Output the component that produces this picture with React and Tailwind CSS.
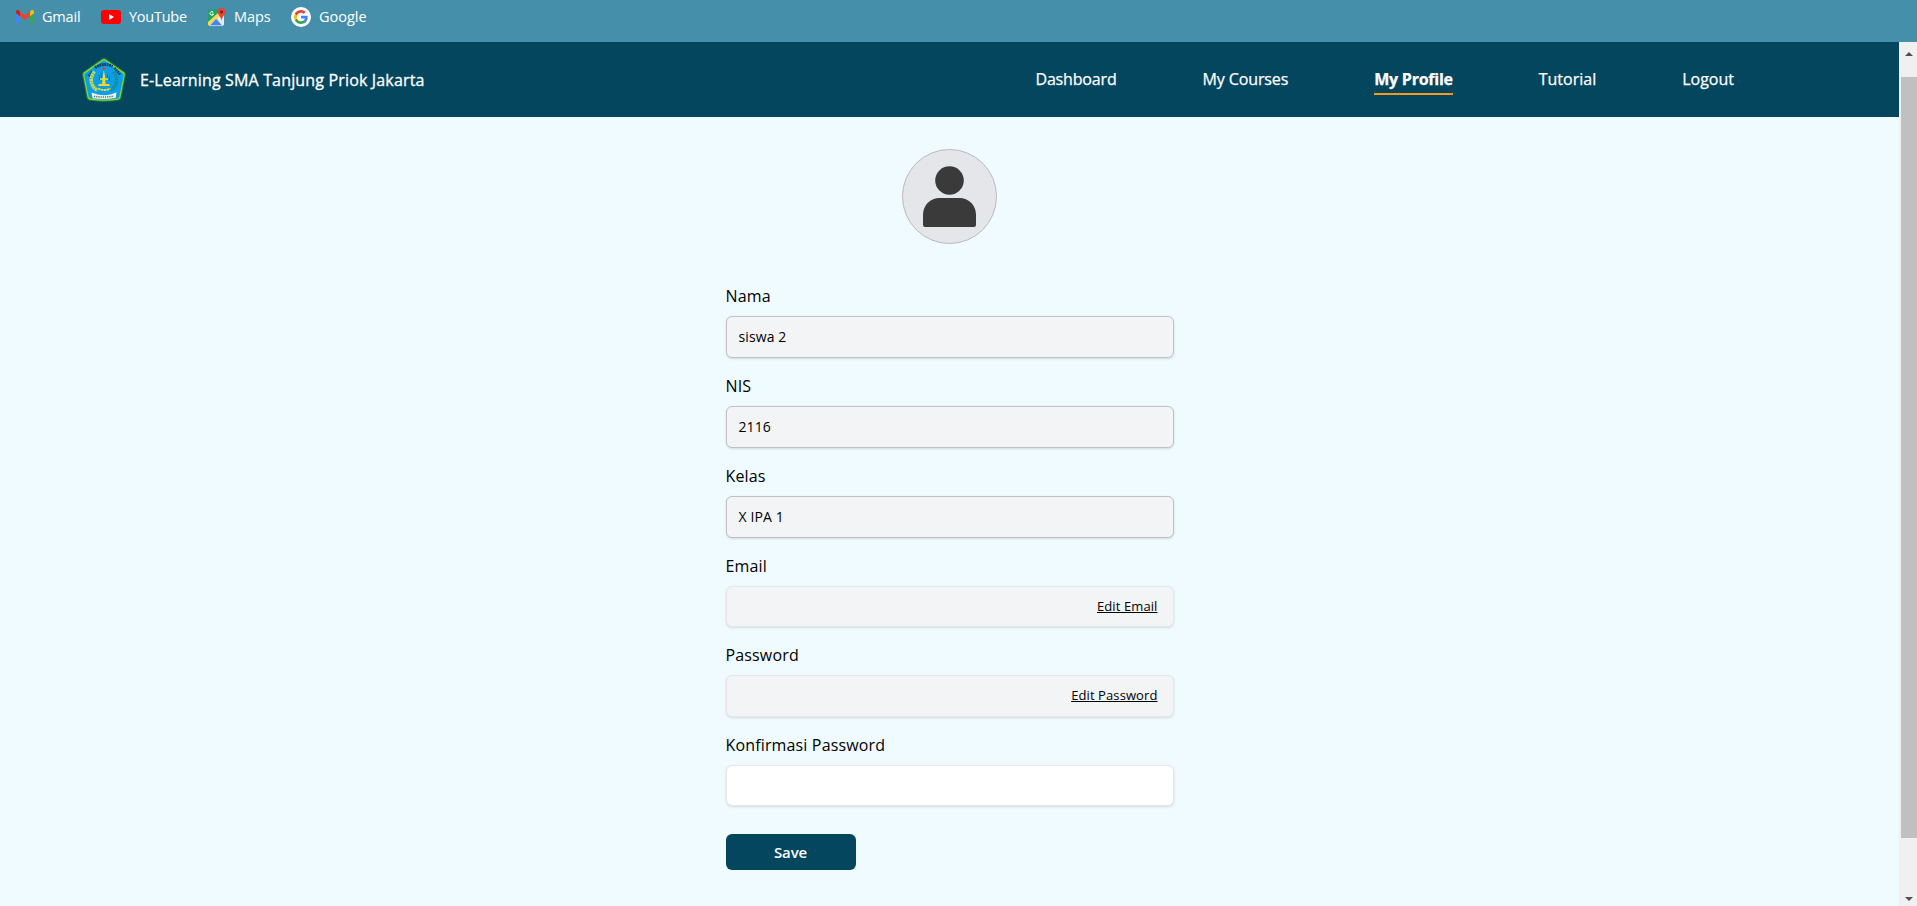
import React from "react";

const NAV = [
  { label: "Dashboard", className: "tracking-[-0.16px] border-transparent" },
  { label: "My Courses", className: "tracking-[-0.12px] border-transparent" },
  { label: "My Profile", className: "tracking-[-0.25px] border-[#f7991f] font-bold" },
  { label: "Tutorial", className: "border-transparent" },
  { label: "Logout", className: "border-transparent" },
];

function GmailIcon() {
  return (
    <svg className="h-[14px] w-[18px]" viewBox="0 0 18 14">
      <path d="M0 3v9.500a1.300 1.300 0 0 0 1.300 1.300H4V6z" fill="#4285f4" />
      <path d="M18 3v9.500a1.300 1.300 0 0 1-1.300 1.300H14V6z" fill="#34a853" />
      <path d="M14 2v4.300l4-3V1.800C18 .2 16.200-.5 15 .5z" fill="#fbbc04" />
      <path d="M4 6.300V1.400l5 3.800 5-3.800v4.900L9 10z" fill="#ea4335" />
      <path d="M0 1.800v1.500l4 3V1.400L3 .5C1.800-.5 0 .2 0 1.800z" fill="#c5221f" />
    </svg>
  );
}

function YouTubeIcon() {
  return (
    <svg className="h-[14px] w-5" viewBox="0 0 20 14">
      <rect width="20" height="14" rx="3" fill="#f00" />
      <path d="M8 4v6l5-3z" fill="#fff" />
    </svg>
  );
}

function MapsIcon() {
  return (
    <svg className="h-[18px] w-[18px]" viewBox="0 0 18 18">
      <rect y="1.500" width="16" height="16" rx="1.500" fill="#1fa463" />
      <path d="M8 9.500 16 4v12.500a1 1 0 0 1-1 1h-1z" fill="#e8eaed" />
      <path d="M0 14 11 4l2.500 2.500L2 17.500H1a1 1 0 0 1-1-1z" fill="#fdd84b" />
      <path d="m8 10.500 6.500 7H1.500z" fill="#4285f4" stroke="#e8eaed" strokeWidth=".7" />
      <path d="M5.300 4.400A1.800 1.800 0 1 0 5.600 6H4" fill="none" stroke="#fff" strokeWidth="1" />
      <path d="M13.500 0a4 4 0 0 1 4 4c0 3-3.500 4-4 9-.5-5-4-6-4-9a4 4 0 0 1 4-4z" fill="#e0483c" />
      <circle cx="13.500" cy="4" r="1.400" fill="#811411" />
    </svg>
  );
}

function GoogleIcon() {
  return (
    <svg className="h-5 w-5" viewBox="0 0 20 20">
      <circle cx="10" cy="10" r="10" fill="#fff" />
      <g transform="translate(3 3) scale(.583)">
        <path fill="#4285F4" d="M23.500 12.300c0-.9-.1-1.500-.2-2.300H12v4.500h6.500c-.1 1.100-.8 2.800-2.400 3.900l3.700 2.900c2.300-2.100 3.700-5.200 3.700-9z" />
        <path fill="#34A853" d="M12 24c3.200 0 6-1.100 7.900-2.900l-3.700-2.900c-1 .7-2.400 1.200-4.200 1.200-3.200 0-5.900-2.100-6.800-5l-3.900 3C3.300 21.300 7.300 24 12 24z" />
        <path fill="#FBBC05" d="M5.200 14.400a7.400 7.400 0 0 1 0-4.700l-4-3.100a12 12 0 0 0 0 10.800z" />
        <path fill="#EA4335" d="M12 4.700c2.300 0 3.800 1 4.700 1.800l3.400-3.300A11.500 11.500 0 0 0 12 0C7.300 0 3.300 2.700 1.300 6.600l3.900 3.100c1-2.900 3.600-5 6.800-5z" />
      </g>
    </svg>
  );
}

function SchoolCrest() {
  return (
    <svg className="h-11 w-11 shrink-0" viewBox="0 0 44 44">
      <path d="M20 .6q2-1 4 0l18.500 13q1.700 1.400 1.400 3.200L39.500 40q-.7 2.200-3 2.800-14.500 2.200-29 0-2.300-.6-3-2.800L.1 16.800q-.3-1.800 1.400-3.200z" fill="#1d7a45" />
      <path d="M20.500 1.500q1.500-.8 3 0l18.300 12.800q1.300 1 1 2.600l-4.400 22.700q-.6 1.800-2.400 2.200-14 2-28 0-1.800-.4-2.400-2.200L1.200 16.900q-.3-1.600 1-2.600z" fill="#8fd62c" />
      <path d="M21 2.800q1-.6 2 0l18 12.600q1 .8.700 1.800l-4.500 21.900q-.5 1.300-1.800 1.500-13.400 1.700-26.800 0-1.300-.2-1.800-1.500L2.300 17.200q-.3-1 .7-1.800z" fill="#0a9fe8" />
      <path d="m6.500 18 3.800-4.500" fill="none" stroke="#123e5c" strokeWidth="2.600" strokeDasharray="1.500 .8" />
      <path d="M13 9.800Q22 3.800 30.500 8.500" fill="none" stroke="#123e5c" strokeWidth="3" strokeDasharray="1.800 .7" />
      <path d="m32.500 10 5.500 6.500" fill="none" stroke="#123e5c" strokeWidth="2.600" strokeDasharray="1.500 .8" />
      <path d="M12.500 13.500c-4.800 6-4.800 14 3 19" fill="none" stroke="#c8d84a" strokeWidth="3.600" strokeDasharray="2.200 .5" />
      <path d="M31.500 14c4.800 6 4 14-3 18" fill="none" stroke="#1b8a8a" strokeWidth="3.400" strokeDasharray="1.600 .8" />
      <path d="M17.500 17v5m2-7v6m6-5v5m2-3v5" stroke="#156a9c" strokeWidth="1" />
      <path d="m21.800 12 1.200 6 .6 8h3.400l1 2H16l1-2h3l.8-8z" fill="#f3d72b" />
      <path d="M18 21h8" stroke="#e8dc35" strokeWidth="1.600" />
      <path d="M16 30.500q6 3 12.500 0" fill="none" stroke="#e8dc35" strokeWidth="1.800" strokeDasharray="2.500 .5" />
      <path d="M20.500 9.500h2.400V12h-2.400z" fill="#d6402b" />
      <path d="m9.500 34.500 6 2q7 1.500 14-.2l5-2-.8 5.500q-11.500 2.300-23 .5z" fill="#f3f6ee" />
      <path d="M12 38.200q10 1.800 20-.2" fill="none" stroke="#516a70" strokeWidth="1.500" strokeDasharray="1.200 1" />
    </svg>
  );
}

function Bookmark({ icon, label, className }) {
  return (
    <a className={"flex items-center " + className}>
      {icon}
      <span>{label}</span>
    </a>
  );
}

function Field({ label, value, action, boxClass, className = "" }) {
  return (
    <div className={className}>
      <label className="block h-6 text-base leading-6 tracking-[0.15px]">{label}</label>
      <div className={"mt-2 flex items-center rounded-md border pr-[15px] pl-3 text-sm shadow-sm " + boxClass}>
        {value && <span className="tracking-[0.1px]">{value}</span>}
        {action && <a className="ml-auto text-[13px] leading-5 tracking-[0.1px] underline">{action}</a>}
      </div>
    </div>
  );
}

export default function App() {
  return (
    <div className="flex h-[906px] w-[1917px] flex-col overflow-hidden bg-[#effbff] font-['Open_Sans',sans-serif] text-black">
      <div className="flex h-[42px] shrink-0 items-start bg-[#468fab] pl-4 text-[14.5px] text-white">
        <div className="flex h-[34px] items-center">
          <Bookmark icon={<GmailIcon />} label="Gmail" className="w-[85px] gap-2 tracking-[-0.2px]" />
          <Bookmark icon={<YouTubeIcon />} label="YouTube" className="w-[107px] gap-2 tracking-[-0.25px]" />
          <Bookmark icon={<MapsIcon />} label="Maps" className="w-[83px] gap-2 tracking-[-0.1px]" />
          <Bookmark icon={<GoogleIcon />} label="Google" className="gap-2" />
        </div>
      </div>
      <div className="flex min-h-0 flex-1">
        <div className="min-w-0 flex-1">
          <header className="flex h-[75px] items-center bg-[#03465e] pr-[165px] pl-[82px] text-base font-medium text-white">
            <SchoolCrest />
            <span className="ml-[14px] tracking-[0.16px] [-webkit-text-stroke:0.3px_white]">
              E-Learning SMA Tanjung Priok Jakarta
            </span>
            <nav className="mt-[2px] ml-auto flex gap-[86px] [-webkit-text-stroke:0.25px_white]">
              {NAV.map((item) => (
                <a key={item.label} className={"border-b-2 pb-0.5 " + item.className}>
                  {item.label}
                </a>
              ))}
            </nav>
          </header>
          <main className="mx-auto w-[448px] pt-8">
            <svg className="mx-auto block h-[95px] w-[95px]" viewBox="0 0 95 95">
              <circle cx="47.500" cy="47.500" r="47" fill="#e5e6ea" stroke="#b9babd" />
              <circle cx="47.500" cy="31.500" r="14.300" fill="#3a3a3a" />
              <path d="M21 65.500a16.500 16.500 0 0 1 16.500-16.500h20A16.500 16.500 0 0 1 74 65.500V76a2 2 0 0 1-2 2H23a2 2 0 0 1-2-2z" fill="#3a3a3a" />
            </svg>
            <form className="mt-10">
              <Field label="Nama" value="siswa 2" boxClass="h-[42px] border-[#bfc1c5] bg-gray-100" />
              <Field label="NIS" value="2116" className="mt-4" boxClass="h-[42px] border-[#bfc1c5] bg-gray-100" />
              <Field label="Kelas" value="X IPA 1" className="mt-4" boxClass="h-[42px] border-[#bfc1c5] bg-gray-100" />
              <Field label="Email" action="Edit Email" className="mt-4" boxClass="h-[41px] border-gray-200 bg-gray-100 pb-px" />
              <Field label="Password" action="Edit Password" className="mt-4" boxClass="h-[42px] border-gray-200 bg-gray-100 pb-0.5" />
              <Field label="Konfirmasi Password" className="mt-4" boxClass="h-[41px] border-gray-200 bg-white" />
              <button type="button" className="mt-7 h-9 w-[130px] rounded-md bg-[#03465e] text-[15px] font-semibold tracking-[-0.1px] text-white">
                Save
              </button>
            </form>
          </main>
        </div>
        <div className="flex w-[18px] shrink-0 flex-col items-end bg-[#f0f0f0]">
          <div className="flex h-[35px] w-4 justify-center pt-[10px]">
            <svg className="h-1 w-2" viewBox="0 0 8 4"><path d="M0 4 4 0l4 4z" fill="#505050" /></svg>
          </div>
          <div className="h-[761px] w-4 bg-[#c0c0c0]" />
          <div className="flex w-4 flex-1 justify-center pt-[59px]">
            <svg className="h-1 w-2" viewBox="0 0 8 4"><path d="m0 0 4 4 4-4z" fill="#505050" /></svg>
          </div>
        </div>
      </div>
    </div>
  );
}
